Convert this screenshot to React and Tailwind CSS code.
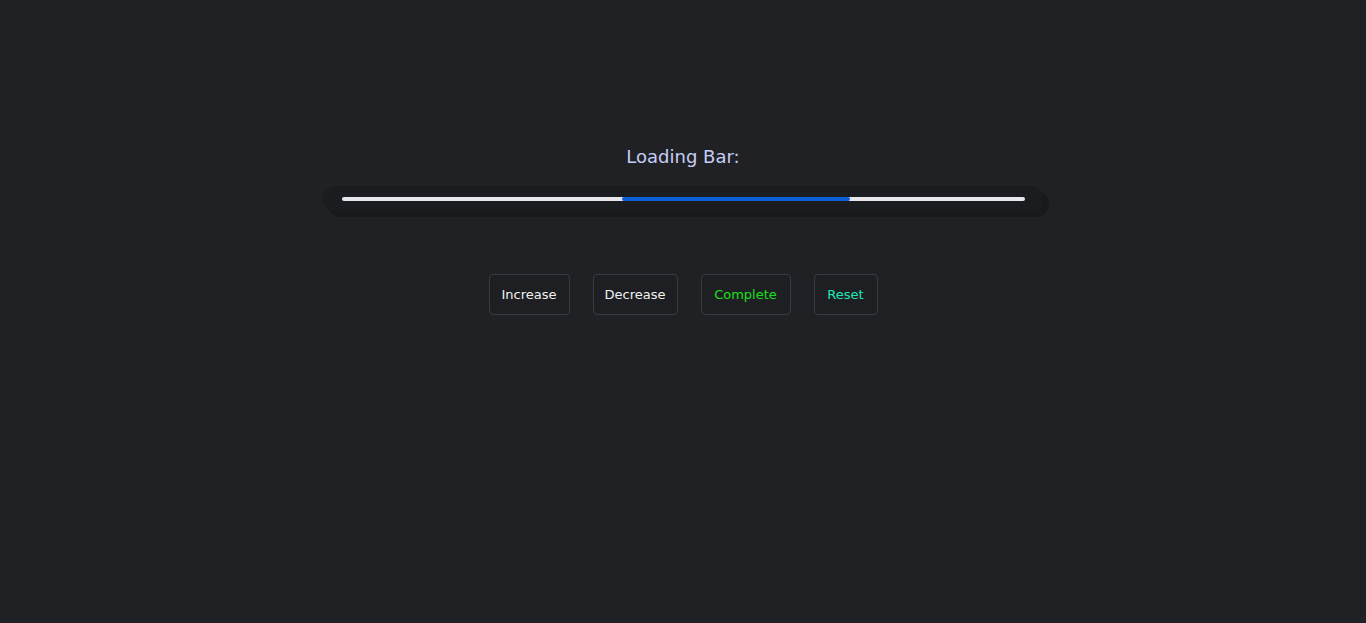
export default function App() {
  return (
    <div className="min-h-screen w-full bg-[#202125] pt-[144px] font-['DejaVu_Sans',sans-serif]">
      <div className="flex flex-col items-center">
        <h1 className="text-[18px] leading-[26px] text-[#c7cdf6]">Loading Bar:</h1>

        <div className="mt-[16px] flex h-[26px] w-[721px] items-center rounded-full bg-[#1b1c1f] px-[19px] shadow-[5px_5px_0_#18191b]">
          <div className="relative h-[4px] w-full rounded-full bg-[#e6e6ec]">
            <div className="absolute left-[41.1%] top-0 h-full w-[33.4%] rounded-full bg-[#0b60d9]" />
          </div>
        </div>

        <div className="mt-[62px] flex gap-[23px] text-[13px]">
          <button className="h-[41px] w-[81px] rounded-[4px] border border-[#3a3b40] bg-[#1e1f22] text-[#f1f1f1]">
            Increase
          </button>
          <button className="h-[41px] w-[85px] rounded-[4px] border border-[#3a3b40] bg-[#1e1f22] text-[#f1f1f1]">
            Decrease
          </button>
          <button className="h-[41px] w-[90px] rounded-[4px] border border-[#3a3b40] bg-[#1e1f22] text-[#19e019]">
            Complete
          </button>
          <button className="h-[41px] w-[64px] rounded-[4px] border border-[#3a3b40] bg-[#1e1f22] text-[#1ee8b8]">
            Reset
          </button>
        </div>
      </div>
    </div>
  );
}
